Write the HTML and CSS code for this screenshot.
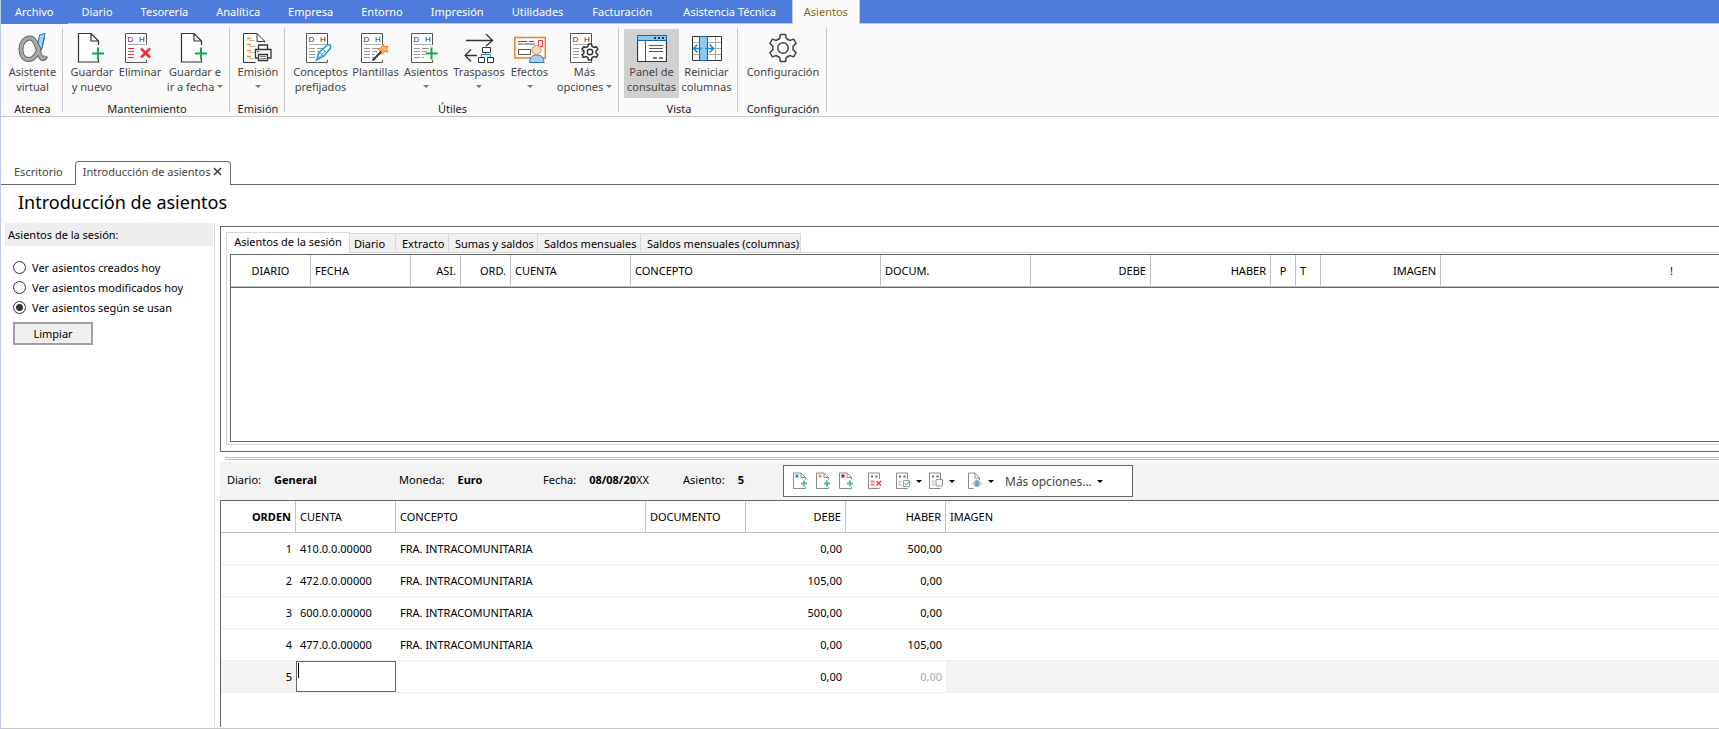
FILE: index.html
```html
<!DOCTYPE html>
<html lang="es">
<head>
<meta charset="utf-8">
<title>Introducción de asientos</title>
<link rel="stylesheet" href="styles.css">
</head>
<body>
<svg class="defs" aria-hidden="true">
  <symbol id="doc-plus" viewBox="0 0 30 30">
    <path d="M21 12.500V8.500L13.500 1H1v28.500h20V25.500M13.500 1v7.500H21" transform="translate(.5 -.5)" fill="#fff" stroke="#333" stroke-width="1.200"/>
    <path d="M15 20.500h12M21 14.500v12" stroke="#12a84c" stroke-width="2"/>
  </symbol>
  <symbol id="ledger" viewBox="0 0 30 30">
    <path d="M21.500 12V.5H.5v29h21V27" fill="#fff" stroke="#555"/>
    <path d="M3 11.500h17" stroke="#aaa"/>
  </symbol>
  <symbol id="lines" viewBox="0 0 30 30">
    <path d="M3 15.500h6M3 18.500h6M3 21.500h6M3 24.500h6M11 15.500h7M11 18.500h5M11 21.500h3M11 24.500h2" stroke="#999"/>
  </symbol>
  <symbol id="gear" viewBox="0 0 30 30">
    <path d="M11.700 5.500L12.500 1.500h5l.8 4 3.500 2 3.800-1.400 2.500 4.300-3 2.700v3.800l3 2.700-2.500 4.300-3.800-1.400-3.500 2-.8 4h-5l-.8-4-3.500-2-3.800 1.400-2.500-4.300 3-2.700v-3.800l-3-2.700 2.500-4.300 3.800 1.400z" fill="#fff" stroke="#444" stroke-width="1.500" stroke-linejoin="round"/>
    <circle cx="15" cy="15" r="5.200" fill="#fff" stroke="#444" stroke-width="1.500"/>
  </symbol>
  <symbol id="gear-small" viewBox="0 0 30 30">
    <path d="M11.700 5.500L12.500 1.500h5l.8 4 3.500 2 3.800-1.400 2.500 4.300-3 2.700v3.800l3 2.700-2.500 4.300-3.800-1.400-3.500 2-.8 4h-5l-.8-4-3.500-2-3.800 1.400-2.500-4.300 3-2.700v-3.800l-3-2.700 2.500-4.300 3.800 1.400z" fill="#fff" stroke="#333" stroke-width="2.500" stroke-linejoin="round"/>
    <circle cx="15" cy="15" r="4.500" fill="#fff" stroke="#333" stroke-width="2.500"/>
  </symbol>
  <symbol id="mini-doc" viewBox="0 0 16 18">
    <path d="M12.500 7.500V5.500L8 1H.5v15.500h12V15M8 1v4.500h4.500" fill="#fff" stroke="#8a8a8a"/>
  </symbol>
  <symbol id="mini-ledger" viewBox="0 0 16 18">
    <path d="M11.500 7V1H.5v15.500h11" fill="#fff" stroke="#8a8a8a"/>
    <path d="M3 4.500h2M7.500 4.500h2" stroke="#666" stroke-width="2"/>
  </symbol>
</svg>

<div class="app">
  <nav class="menu" aria-label="Menú principal">
    <a href="#" class="file">Archivo</a>
    <a href="#">Diario</a><a href="#">Tesorería</a><a href="#">Analítica</a><a href="#">Empresa</a><a href="#">Entorno</a><a href="#">Impresión</a><a href="#">Utilidades</a><a href="#" class="long">Facturación</a><a href="#" class="long">Asistencia Técnica</a><a href="#" class="active" aria-current="page">Asientos</a>
  </nav>

  <div class="ribbon">
    <section class="group g-atenea">
      <div class="buttons">
        <button class="b-l"><svg viewBox="0 0 30 30">
          <path d="M24.500 4C22.500 15 18 26.500 11 26.500 5.500 26.500 3 22 3 16.500S6 5 12 5c8.500 0 7.500 20.500 13 20.500 1.200 0 2-.8 2.500-2.500" fill="none" stroke="#666" stroke-width="5"/>
          <path d="M24 5C22 15 18 26.500 11 26.500 5.500 26.500 3 22 3 16.500S6 5 12 5c8.500 0 7.500 20.500 13 20.500 1 0 1.700-.6 2.200-2" fill="none" stroke="#aaa" stroke-width="3"/>
          <path d="M21.500 2l5.500-1.500L23.500 17l-3.500-7z" fill="#a5d6f5" stroke="#1670b8"/></svg>
          <span>Asistente<br>virtual</span></button>
      </div>
      <h2>Atenea</h2>
    </section>
    <section class="group g-mant">
      <div class="buttons">
        <button class="b-s"><svg><use href="#doc-plus"/></svg><span>Guardar<br>y nuevo</span></button>
        <button class="b-s"><svg viewBox="0 0 30 30"><use href="#ledger"/><text x="2.500" y="9" class="dh">D</text><text x="14" y="9" class="dh">H</text><path d="M3 15.500h6M3 18.500h6M3 21.500h6M3 24.500h6" stroke="#e33" stroke-width="1.200"/><path d="M16 15.500l9 9M25 15.500l-9 9" stroke="#ec3237" stroke-width="2.500"/></svg><span>Eliminar</span></button>
        <button class="b-l"><svg><use href="#doc-plus"/></svg><span>Guardar e<br>ir a fecha <i class="caret"></i></span></button>
      </div>
      <h2>Mantenimiento</h2>
    </section>
    <section class="group g-emi">
      <div class="buttons">
        <button class="b-l"><svg viewBox="0 0 30 30">
          <path d="M21.500 9.500V8L14 .5H.5v29h12M14 .5V8.500h7.500" fill="#fff" stroke="#333"/>
          <path d="M4 5.500h4M4 11.500h4M4 17.500h4M4 23.500h4" stroke="#f39200" stroke-width="1.500"/><path d="M6 7.500h6M6 13.500h6M6 19.500h6M6 25.500h5" stroke="#bbb"/>
          <path d="M15.500 16v-4h9v4M15.500 25h-3v-8.500h15.500v8.500h-3M15.500 21.500h9v6h-9z" fill="#fff" stroke="#333" stroke-width="1.300"/><path d="M17 23.500h6M17 25.500h6" stroke="#777"/><path d="M14 18.500h2" stroke="#1787d2"/></svg><span>Emisión<br><i class="caret"></i></span></button>
      </div>
      <h2>Emisión</h2>
    </section>
    <section class="group g-util">
      <div class="buttons">
        <button class="b-l"><svg viewBox="0 0 30 30"><use href="#ledger"/><text x="2.500" y="9" class="dh">D</text><text x="14" y="9" class="dh">H</text><use href="#lines"/><path d="M10.500 27l3-8 8-7c2-1 4 1 3 3l-6.500 8z" fill="#fff" stroke="#1c9ad6" stroke-width="1.500"/><path d="M10.500 27l9-9M17 16l4 4M13.500 19l3.500 4" stroke="#1c9ad6"/></svg><span>Conceptos<br>prefijados</span></button>
        <button class="b-s"><svg viewBox="0 0 30 30"><use href="#ledger"/><text x="2.500" y="9" class="dh">D</text><text x="14" y="9" class="dh">H</text><use href="#lines"/><path d="M11.500 27.500L22 17" stroke="#333" stroke-width="2"/><path d="M22 11l1.500 3 3.500-1-1.500 3 1.500 3-3.500-.5L21 21.500 20.500 18l-3.500-1.500 3.500-2z" fill="#f9b45c" stroke="#e8801c"/></svg><span>Plantillas</span></button>
        <button class="b-m"><svg viewBox="0 0 30 30"><use href="#ledger"/><text x="2.500" y="9" class="dh">D</text><text x="14" y="9" class="dh">H</text><use href="#lines"/><path d="M14.500 20.500h12M20.500 14.500v12" stroke="#12a84c" stroke-width="2"/></svg><span>Asientos<br><i class="caret"></i></span></button>
        <button class="b-m"><svg viewBox="0 0 30 30"><path d="M2 7.500h26M22 1l6.500 6.500L22 13M13 22.500H1.500M7 16.500l-6 6 6 6" fill="none" stroke="#333" stroke-width="1.300"/><path d="M17.500 24v-2.500h9V24M21.500 21v-2" fill="none" stroke="#1c8ccc"/><path d="M18.500 14.500h8v5h-8zM14.500 24.500h6v5h-6zM23.500 24.500h6v5h-6z" fill="#fff" stroke="#333"/></svg><span>Traspasos<br><i class="caret"></i></span></button>
        <button class="b-s"><svg viewBox="0 0 32 30" class="wide"><path d="M.8 4.500h30.500v20.500H.8z" fill="#fff" stroke="#e8802a" stroke-width="1.500"/><path d="M4 8.500h9M15 8.500h5M4 11h17M4.500 16.500h12v5h-12z" fill="none" stroke="#555"/><path d="M24.500 7.500h4v6h-4z" fill="#fff" stroke="#e33"/><path d="M15.500 29.500c0-5 3-7.500 7.500-7.500s7 2.500 7 7.500z" fill="#a8d0ee" stroke="#2a7ab8"/><circle cx="22.500" cy="17" r="4.500" fill="#f9dcc0" stroke="#c98a50"/></svg><span>Efectos<br><i class="caret"></i></span></button>
        <button class="b-l"><svg viewBox="0 0 30 30"><use href="#ledger"/><text x="2.500" y="9" class="dh">D</text><text x="14" y="9" class="dh">H</text><use href="#lines"/><use href="#gear-small" x="11" y="10" width="18" height="18"/></svg><span>Más<br>opciones <i class="caret"></i></span></button>
      </div>
      <h2>Útiles</h2>
    </section>
    <section class="group g-vista">
      <div class="buttons">
        <button class="b-v pressed" aria-pressed="true"><svg viewBox="0 0 30 30"><path d="M.5 3h29v25.500H.5z" fill="#fff" stroke="#333" stroke-width="1.200"/><path d="M.5 2.500h29v5H.5z" fill="#8cc8f0" stroke="#1467ad"/><path d="M17 5h2M21 5h2M25 5h2" stroke="#333" stroke-width="2"/><path d="M8.500 8v20M12 12.500h14M12 15.500h14M12 18.500h14" stroke="#555"/><path d="M16 25h4M22 25h4" stroke="#777" stroke-width="2"/></svg><span>Panel de<br>consultas</span></button>
        <button class="b-v"><svg viewBox="0 0 30 30"><path d="M.5 3.500h29v24H.5z" fill="#fff" stroke="#333"/><path d="M1 9.500h28M1 15.500h28M1 21.500h28M23.500 4v23" stroke="#aaa"/><path d="M7.500 3.500h8v24h-8z" fill="#8cc8f0" stroke="#1467ad"/><path d="M10 15.500H2M5.500 11.500l-4 4 4 4M13 15.500h8M17.500 11.500l4 4-4 4" fill="none" stroke="#1787d2" stroke-width="1.500"/></svg><span>Reiniciar<br>columnas</span></button>
      </div>
      <h2>Vista</h2>
    </section>
    <section class="group g-conf">
      <div class="buttons">
        <button class="b-c"><svg><use href="#gear"/></svg><span>Configuración</span></button>
      </div>
      <h2>Configuración</h2>
    </section>
  </div>

  <div class="doc-tabs">
    <a href="#" class="doc-tab">Escritorio</a>
    <div class="doc-tab current">Introducción de asientos
      <button aria-label="Cerrar"><svg viewBox="0 0 10 10"><path d="M1 1l8 8M9 1L1 9" stroke="#333" stroke-width="1.500"/></svg></button></div>
  </div>

  <h1>Introducción de asientos</h1>

  <div class="body">
    <aside class="side">
      <h3>Asientos de la sesión:</h3>
      <form>
        <label><input type="radio" name="ver">Ver asientos creados hoy</label>
        <label><input type="radio" name="ver">Ver asientos modificados hoy</label>
        <label><input type="radio" name="ver" checked>Ver asientos según se usan</label>
        <button type="button">Limpiar</button>
      </form>
    </aside>

    <main class="main">
      <section class="query">
        <div class="tabs" role="tablist">
          <button role="tab" aria-selected="true" class="t1">Asientos de la sesión</button><button role="tab" class="t2">Diario</button><button role="tab" class="t3">Extracto</button><button role="tab" class="t4">Sumas y saldos</button><button role="tab" class="t5">Saldos mensuales</button><button role="tab" class="t6">Saldos mensuales (columnas)</button>
        </div>
        <div class="pane">
          <div class="grid-box">
            <table class="grid session">
              <colgroup><col class="c80"><col class="c100"><col class="c50"><col class="c50"><col class="c120"><col class="c250"><col class="c150"><col class="c120"><col class="c120"><col class="c25"><col class="c25"><col class="c120"><col></colgroup>
              <thead><tr><th class="mid">DIARIO</th><th>FECHA</th><th class="num">ASI.</th><th class="num">ORD.</th><th>CUENTA</th><th>CONCEPTO</th><th>DOCUM.</th><th class="num">DEBE</th><th class="num">HABER</th><th class="mid">P</th><th>T</th><th class="num">IMAGEN</th><th class="num alert">!</th></tr></thead>
            </table>
          </div>
        </div>
      </section>
      <div class="splitter"></div>
      <section class="entry">
        <div class="info">
          <dl>
            <div class="i1"><dt>Diario:</dt><dd>General</dd></div>
            <div class="i2"><dt>Moneda:</dt><dd>Euro</dd></div>
            <div class="i3"><dt>Fecha:</dt><dd>08/08/20<span>XX</span></dd></div>
            <div class="i4"><dt>Asiento:</dt><dd>5</dd></div>
          </dl>
          <div class="toolbar">
            <button aria-label="Añadir apunte"><svg viewBox="0 0 16 18"><use href="#mini-doc"/><path d="M2.500 2.500h3v3h-3z" fill="#0c8fd8"/><path d="M8 11.500h6M11 8.500v6" stroke="#55c388" stroke-width="2"/></svg></button>
            <button aria-label="Insertar apunte"><svg viewBox="0 0 16 18"><use href="#mini-doc"/><path d="M2.500 2.500h3v3h-3z" fill="#f5a623"/><path d="M8 11.500h6M11 8.500v6" stroke="#55c388" stroke-width="2"/></svg></button>
            <button aria-label="Duplicar apunte"><svg viewBox="0 0 16 18"><use href="#mini-doc"/><path d="M2.500 2.500h3v3h-3z" fill="#d0021b"/><path d="M8 11.500h6M11 8.500v6" stroke="#55c388" stroke-width="2"/></svg></button>
            <button class="del" aria-label="Eliminar apunte"><svg viewBox="0 0 16 18"><use href="#mini-ledger"/><path d="M2.500 9.500h4M2.500 12.500h4" stroke="#f08080" stroke-width="2"/><path d="M8.500 9l4.500 4.500M13 9l-4.500 4.500" stroke="#e94040" stroke-width="1.500"/></svg></button>
            <button class="split" aria-label="Punteo"><svg viewBox="0 0 16 18"><use href="#mini-ledger"/><path d="M2.500 9.500h3M2.500 12.500h3" stroke="#ccc" stroke-width="2"/><path d="M7.500 8.500h6v6h-6z" fill="#fff" stroke="#999"/><path d="M8.500 11l2 2 3-4" fill="none" stroke="#3bb36c"/></svg><i class="caret dark"></i></button>
            <button class="split" aria-label="Copiar"><svg viewBox="0 0 16 18"><use href="#mini-ledger"/><path d="M2.500 9.500h3M2.500 12.500h3" stroke="#ccc" stroke-width="2"/><path d="M7 7.500h6.500v6.500H7z" fill="#fff" stroke="#999"/></svg><i class="caret dark"></i></button>
            <button class="split view" aria-label="Ver documento"><svg viewBox="0 0 16 18"><path d="M11.500 8V6L7 1H.5v15.500h5M7 1v5h4.500" fill="#fff" stroke="#8a8a8a"/><path d="M5 11.500c2-4 6-4 8 0-2 4-6 4-8 0z" fill="#fff" stroke="#999"/><circle cx="9" cy="11.500" r="2.500" fill="#5da6d8"/></svg><i class="caret dark"></i></button>
            <button class="more">Más opciones...<i class="caret dark"></i></button>
          </div>
        </div>
        <div class="lines-box">
        <table class="grid lines">
          <colgroup><col class="c75"><col class="c100"><col class="c250"><col class="c100"><col class="c100"><col class="c100"><col></colgroup>
          <thead><tr><th class="num strong">ORDEN</th><th>CUENTA</th><th>CONCEPTO</th><th>DOCUMENTO</th><th class="num">DEBE</th><th class="num">HABER</th><th>IMAGEN</th></tr></thead>
          <tbody>
            <tr><td class="num">1</td><td>410.0.0.00000</td><td>FRA. INTRACOMUNITARIA</td><td></td><td class="num">0,00</td><td class="num">500,00</td><td></td></tr>
            <tr><td class="num">2</td><td>472.0.0.00000</td><td>FRA. INTRACOMUNITARIA</td><td></td><td class="num">105,00</td><td class="num">0,00</td><td></td></tr>
            <tr><td class="num">3</td><td>600.0.0.00000</td><td>FRA. INTRACOMUNITARIA</td><td></td><td class="num">500,00</td><td class="num">0,00</td><td></td></tr>
            <tr><td class="num">4</td><td>477.0.0.00000</td><td>FRA. INTRACOMUNITARIA</td><td></td><td class="num">0,00</td><td class="num">105,00</td><td></td></tr>
            <tr><td class="num shade">5</td><td class="edit"><div class="field"><input type="text" aria-label="Cuenta"><i class="cursor"></i></div></td><td></td><td></td><td class="num">0,00</td><td class="num faint">0,00</td><td class="shade"></td></tr>
          </tbody>
        </table>
        </div>
      </section>
    </main>
  </div>
</div>
</body>
</html>
```

FILE: styles.css
```css
* { box-sizing: border-box; }
html, body { height: 100%; }
body {
  margin: 0;
  overflow: hidden;
  background: #fff;
  color: #000;
  font: 11px/15px "Noto Sans", "Open Sans", sans-serif;
}
button, input { font: inherit; color: inherit; }
button { margin: 0; padding: 0; border: 0; background: none; }
a { color: inherit; text-decoration: none; }
h1, h2, h3, dl, dd { margin: 0; font-weight: 400; }
.defs { display: none; }
.dh { font-family: "Liberation Sans", sans-serif; font-size: 8px; fill: #333; }

.app {
  display: flex;
  flex-direction: column;
  min-height: 100vh;
  border-left: 1px solid #bccae6;
  border-bottom: 1px solid #c8c8c8;
}

/* Menu bar */
.menu { display: flex; height: 24px; background: #4d7cdd; color: #fff; }
.menu a {
  padding: 4px 14px 0;
  border-bottom: 1px solid #c8c8c8;
}
.menu .file { border-color: #4d7cdd; }
.menu .long { padding: 4px 16px 0 15px; }
.menu::after { content: ""; flex: 1; border-bottom: 1px solid #c8c8c8; }
.menu .active {
  padding: 4px 11px 0;
  background: #fafafa;
  color: #8a6414;
  border: solid #c8c8c8;
  border-width: 0 1px;
}

/* Ribbon */
.ribbon { display: flex; height: 93px; padding-top: 4px; background: #fafafa; border-bottom: 1px solid #c6c6c6; color: #444; }
.group {
  display: flex;
  flex-direction: column;
  height: 84px;
  border-right: 1px solid #c6c6c6;
}
.group h2 { margin-top: 3px; padding-left: 2px; color: #222; font-size: 11px; text-align: center; flex: none; }
.buttons { display: flex; justify-content: center; flex: none; height: 70px; padding: 1px 0 0 2px; }
.buttons button { display: flex; flex-direction: column; align-items: center; padding-top: 4px; white-space: nowrap; flex: none; }
.buttons svg { width: 30px; height: 30px; margin-bottom: 1px; fill: none; flex: none; }
.buttons svg.wide { width: 32px; }
.buttons br + .caret { vertical-align: 3px; }
.g-atenea { width: 62px; }
.g-mant { width: 167px; }
.g-emi { width: 55px; }
.g-util { width: 334px; }
.g-vista { width: 119px; }
.g-conf { width: 89px; }
.b-s { width: 48px; }
.b-m { width: 53px; }
.b-v { width: 55px; }
.b-l { width: 62px; }
.b-c { width: 88px; }
.pressed { background: #d0d0d0; }
.caret {
  display: inline-block;
  vertical-align: 2px;
  border: solid transparent;
  border-width: 3px 3px 0;
  border-top-color: #777;
}
.caret.dark { border-top-color: #000; }

/* Document tabs */
.doc-tabs { display: flex; align-items: flex-end; margin-top: 44px; height: 24px; border-bottom: 1px solid #666; color: #444; }
.doc-tab { padding: 3px 13px 5px; }
.doc-tab.current {
  display: flex;
  align-items: center;
  gap: 3px;
  margin: 0 0 -1px -1px;
  padding: 2px 8px 6px 7px;
  border: 1px solid #666;
  border-bottom: 0;
  border-radius: 4px 4px 0 0;
  background: #fff;
}
.doc-tab svg { display: block; width: 9px; height: 9px; }
h1 { padding: 5px 17px 0; font-size: 18px; line-height: 25px; }

/* Body */
.body { display: flex; flex: 1; margin: 8px 0 1px; }
.side { width: 214px; padding-left: 4px; border-right: 1px solid #d8d8d8; flex: none; }
.side h3 { margin-right: 1px; padding: 4px 3px; background: #eee; font-size: 11px; }
.side form { display: flex; flex-direction: column; align-items: flex-start; gap: 5px; margin-top: 14px; padding-left: 8px; }
.side label { display: flex; align-items: center; gap: 6px; }
.side input {
  appearance: none;
  width: 13px;
  height: 13px;
  margin: 0;
  border: 1px solid #333;
  border-radius: 50%;
  background: #fff;
}
.side input:checked { background: radial-gradient(circle, #333 0 3px, #fff 4px); }
.side form button { width: 80px; margin-top: 2px; border: 2px solid #a0a0a0; background: #f0f0f0; line-height: 19px; }

.main { flex: 1; min-width: 0; display: flex; flex-direction: column; padding: 3px 0 0 5px; }
.query { padding: 5px 0 6px 5px; border: 1px solid #666; border-right: 0; }
.tabs { display: flex; align-items: flex-end; }
.tabs button { height: 19px; padding: 0 6px; border: solid #d8d8d8; border-width: 1px 1px 0 0; background: #f0f0f0; text-align: left; white-space: nowrap; }
.tabs [aria-selected="true"] { height: 21px; margin-bottom: -1px; padding-bottom: 3px; border-left-width: 1px; background: #fff; text-align: center; }
.tabs .t1 { width: 124px; }
.tabs .t2 { width: 46px; padding-left: 4px; }
.tabs .t3 { width: 53px; }
.tabs .t4 { width: 89px; }
.tabs .t5 { width: 103px; }
.tabs .t6 { width: 160px; }
.pane { padding: 1px 0 2px 3px; border: 1px solid #d8d8d8; border-right: 0; }
.grid-box { height: 188px; border: 1px solid #666; border-right: 0; }
.splitter { margin: 5px 0 2px 5px; height: 3px; border: solid #c0c0c0; border-width: 1px 0; }

.entry { flex: 1; display: flex; flex-direction: column; }
.info { display: flex; align-items: center; height: 38px; background: #f3f3f3; }
dl { display: flex; padding: 0 0 3px 7px; }
dl div { display: flex; gap: 13px; }
dd { font-weight: 700; }
dd span { font-weight: 400; }
.i1 { width: 172px; }
.i2 { width: 144px; }
.i3 { width: 140px; }
.i4 { width: 100px; }
.toolbar { display: flex; align-items: center; gap: 7px; width: 350px; height: 32px; padding-left: 9px; border: 1px solid #666; background: #fff; color: #444; }
.toolbar button { display: flex; align-items: center; gap: 4px; }
.toolbar svg { width: 16px; height: 18px; fill: none; }
.toolbar .del { margin: 0 5px 0 6px; }
.toolbar .view { margin: 0 4px 0 6px; }
.toolbar .more { gap: 5px; font-size: 12px; }
.toolbar .caret { vertical-align: 0; }

/* Grids */
.grid { width: 100%; table-layout: fixed; border-collapse: separate; border-spacing: 0; }
.grid th, .grid td { height: 32px; padding: 0 4px; font-weight: 400; text-align: left; white-space: nowrap; }
.grid th { border-right: 1px solid #c0c0c0; border-bottom: 1px solid #c0c0c0; }
.grid th:last-child { border-right: 0; }
.grid td { border-bottom: 1px solid #eee; }
.grid .num { text-align: right; }
.grid .mid { text-align: center; }
.grid .strong { font-weight: 700; }
.session { border-bottom: 1px solid #666; }
.session .alert { padding-right: 46px; }
.lines { border-top: 1px solid #666; }
.lines-box { flex: 1; border-left: 1px solid #666; }
.grid .shade { background: #f3f3f3; }
.grid .faint { color: #aaa; }
.grid .edit { padding: 0; }
.field { position: relative; }
.field input { display: block; width: 100%; height: 31px; padding: 0 4px; border: 1px solid #666; background: #fff; }
.cursor { position: absolute; left: 2px; top: 2px; width: 1px; height: 15px; background: #000; }
.c25 { width: 25px; }
.c50 { width: 50px; }
.c75 { width: 75px; }
.c80 { width: 80px; }
.c100 { width: 100px; }
.c120 { width: 120px; }
.c150 { width: 150px; }
.c250 { width: 250px; }
```
